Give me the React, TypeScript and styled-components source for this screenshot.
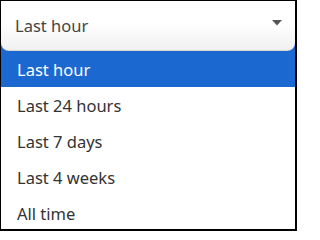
import { FC } from 'react';
import styled, { createGlobalStyle } from 'styled-components';

const GlobalStyle = createGlobalStyle`
  html, body {
    margin: 0;
    padding: 0;
    background: #ffffff;
  }
  body {
    font-family: 'Noto Sans', 'Liberation Sans', sans-serif;
  }
`;

const Frame = styled.div`
  width: 297px;
  height: 231px;
  box-sizing: border-box;
  border-style: solid;
  border-color: #000000;
  border-width: 1px 2px 2px 1px;
  background: #ffffff;
  display: flex;
  flex-direction: column;
  overflow: hidden;
`;

const Header = styled.div`
  position: relative;
  z-index: 1;
  height: 49px;
  flex-shrink: 0;
  display: flex;
  align-items: center;
  justify-content: space-between;
  padding: 0 13px 0 14px;
  background: linear-gradient(#ffffff 0%, #ffffff 45%, #f0f0f0 100%);
  border-radius: 0 0 8px 8px;
  border-bottom: 1px solid #d6d6d6;
  margin-bottom: -8px;
`;

const Value = styled.span`
  font-size: 16.5px;
  color: #444444;
  margin-top: -1px;
`;

const Caret = styled.svg`
  width: 10px;
  height: 6px;
  margin-top: -5px;
`;

const List = styled.div`
  display: flex;
  flex-direction: column;
`;

const Option = styled.div<{ $selected?: boolean }>`
  height: 36px;
  display: flex;
  align-items: center;
  padding-left: 16px;
  font-size: 16.5px;
  color: ${({ $selected }) => ($selected ? '#ffffff' : '#333333')};
  background: ${({ $selected }) => ($selected ? '#1b68d1' : 'transparent')};

  &:first-child {
    height: 44px;
    padding-top: 8px;
    box-sizing: border-box;
  }
`;

const options = ['Last hour', 'Last 24 hours', 'Last 7 days', 'Last 4 weeks', 'All time'];

const App: FC = () => {
  const selected = 'Last hour';
  return (
    <>
      <GlobalStyle />
      <Frame>
        <Header>
          <Value>{selected}</Value>
          <Caret viewBox='0 0 10 6'>
            <path d='M0 0 L10 0 L5 5.5 Z' fill='#555555' />
          </Caret>
        </Header>
        <List>
          {options.map((opt) => (
            <Option key={opt} $selected={opt === selected}>
              {opt}
            </Option>
          ))}
        </List>
      </Frame>
    </>
  );
};

export default App;
